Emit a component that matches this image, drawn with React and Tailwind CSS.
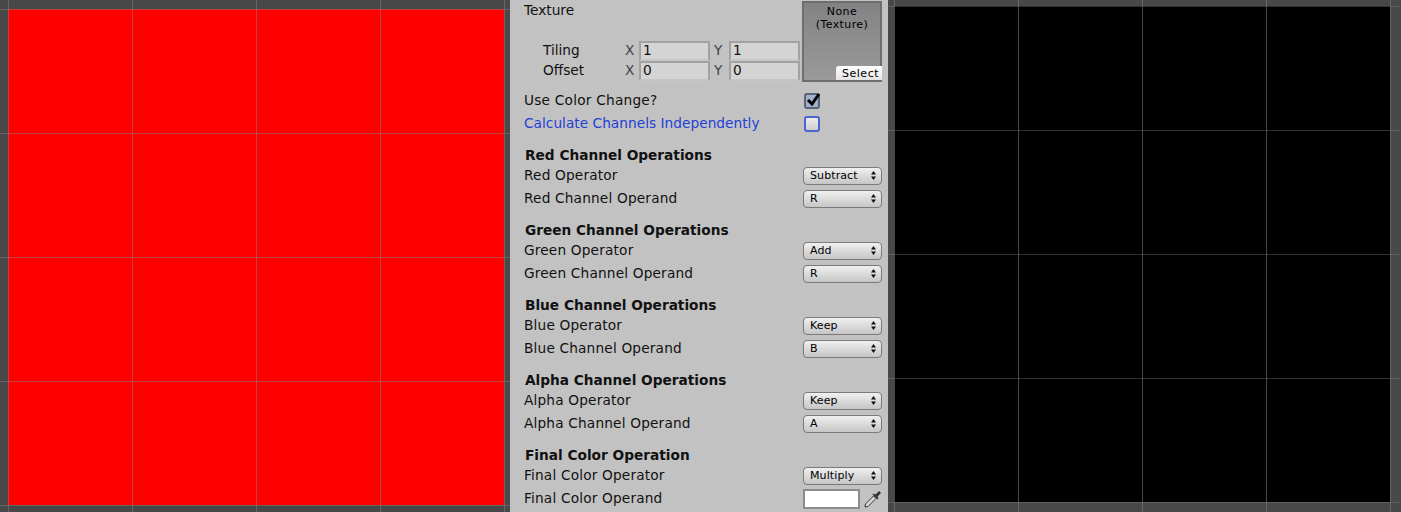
import React from "react";

const lines = [0, 124, 248, 372, 496];

function Viewport({ fill, x, y, w, opacityV, opacityH, className }) {
  return (
    <div className={className}>
      <svg width={w} height="512" className="block">
        <rect width={w} height="512" fill="#484848" />
        <rect x={x} y={y} width="496" height="496" fill={fill} />
        {lines.map((d) => (
          <line key={"v" + d} x1={x + d + 0.5} x2={x + d + 0.5} y1="0" y2="512" stroke="#808080" strokeOpacity={opacityV} strokeWidth="1" />
        ))}
        {lines.map((d) => (
          <line key={"h" + d} y1={y + d + 0.5} y2={y + d + 0.5} x1="0" x2={w} stroke="#808080" strokeOpacity={opacityH} strokeWidth="1" />
        ))}
      </svg>
    </div>
  );
}

function Arrows() {
  return (
    <svg width="5" height="9" viewBox="0 0 5 9" className="block">
      <path d="M2.5 0 L5 3.5 H0 Z M2.5 9 L0 5.5 H5 Z" fill="#111" />
    </svg>
  );
}

function Select({ value }) {
  return (
    <div className="flex h-[18px] w-[79px] items-center justify-between rounded-[4px] border border-[#7a7a7a] bg-gradient-to-b from-[#f0f0f0] to-[#c6c6c6] pl-[6px] pr-[5px] text-[11px] leading-none tracking-[0.1px] text-black">
      <span>{value}</span>
      <Arrows />
    </div>
  );
}

function Row({ label, children }) {
  return (
    <div className="flex h-[23px] items-center justify-between">
      <span className="-mt-px tracking-[0.17px]">{label}</span>
      {children}
    </div>
  );
}

function Group({ title, op, opValue, operand, operandValue, custom }) {
  return (
    <div className="h-[75px]">
      <div className="flex h-[20px] items-center pl-px pt-[3px] font-bold">{title}</div>
      <Row label={op}>
        <Select value={opValue} />
      </Row>
      <Row label={operand}>{custom || <Select value={operandValue} />}</Row>
    </div>
  );
}

function Field({ value }) {
  return (
    <div className="flex h-[20px] w-[71px] items-center border-2 border-[#a2a2a2] border-b-[#c6c6c6] bg-[#d4d4d4] pb-px pl-[2px] leading-none text-[#111]">
      {value}
    </div>
  );
}

function VectorRow({ label, x, y }) {
  return (
    <div className="flex h-[20px] items-center">
      <span className="-mt-[2px] w-[101px] pl-[19px]">{label}</span>
      <span className="-mt-[2px] w-[14px] text-[#444]">X</span>
      <Field value={x} />
      <span className="-mt-[2px] w-[19px] pl-[4px] text-[#444]">Y</span>
      <Field value={y} />
    </div>
  );
}

function Check({ checked, className }) {
  return (
    <div className={"relative h-[16px] w-[16px] rounded-[3px] border-2 " + className}>
      {checked && (
        <svg width="18" height="16" viewBox="0 0 18 16" className="absolute -top-[3px] -left-[1px]">
          <path d="M3 8 L7 12 L14 2" fill="none" stroke="#000" strokeWidth="3" />
        </svg>
      )}
    </div>
  );
}

function Pipette() {
  return (
    <svg width="18" height="18" viewBox="0 0 18 18" className="block">
      <path d="M1 17 L1.5 14 L9.5 6 L12 8.5 L4 16.5 Z" fill="#d8d8d8" stroke="#333" strokeWidth="1" strokeLinejoin="round" />
      <path d="M8.5 4.5 L13.5 9.5 L14.5 8.5 L13.5 6.5 L17 3 L15 1 L11.5 4.5 L9.5 3.5 Z" fill="#333" />
    </svg>
  );
}

export default function App() {
  return (
    <div className="flex h-[512px] w-[1401px] overflow-hidden bg-[#484848] font-['DejaVu_Sans',sans-serif] text-[13.7px] text-[#111]">
      <Viewport className="w-[510px] shrink-0" fill="#ff0000" x={8} y={9} w={510} opacityV={0.55} opacityH={0.5} />
      <div className="w-[378px] shrink-0 bg-[#c2c2c2] pl-[14px] pr-[6px]">
        <div className="relative h-[89px]">
          <div className="flex h-[20px] items-center">Texture</div>
          <div className="mt-[21px]">
            <VectorRow label="Tiling" x="1" y="1" />
            <VectorRow label="Offset" x="0" y="0" />
          </div>
          <div className="absolute right-0 top-px h-[81px] w-[80px] border-2 border-[#6e6e6e] bg-gradient-to-b from-[#838383] to-[#9a9a9a] pt-[2px] text-center text-[11px] leading-[13px] tracking-[0.4px] text-black">
            None
            <br />
            (Texture)
            <div className="absolute -bottom-[2px] -right-[2px] h-[16px] w-[46px] rounded-tl-[3px] border-b-2 border-[#6e6e6e] bg-gradient-to-b from-white to-[#e4e4e4] pr-[3px] text-right text-[11px] leading-[16px] tracking-[0.5px]">
              Select
            </div>
          </div>
        </div>
        <div className="flex h-[23px] items-center justify-between pr-[62px]">
          <span className="-mt-px tracking-[0.22px]">Use Color Change?</span>
          <Check checked className="border-[#59647a] bg-[#9fb0c8]" />
        </div>
        <div className="flex h-[23px] items-center justify-between pr-[62px]">
          <span className="-mt-px tracking-[0.03px] text-[#1f3fd6]">Calculate Channels Independently</span>
          <Check className="border-[#4a64d0] bg-gradient-to-b from-[#ececec] to-[#cfcfcf]" />
        </div>
        <div className="h-[9px]" />
        <Group title="Red Channel Operations" op="Red Operator" opValue="Subtract" operand="Red Channel Operand" operandValue="R" />
        <Group title="Green Channel Operations" op="Green Operator" opValue="Add" operand="Green Channel Operand" operandValue="R" />
        <Group title="Blue Channel Operations" op="Blue Operator" opValue="Keep" operand="Blue Channel Operand" operandValue="B" />
        <Group title="Alpha Channel Operations" op="Alpha Operator" opValue="Keep" operand="Alpha Channel Operand" operandValue="A" />
        <Group
          title="Final Color Operation"
          op="Final Color Operator"
          opValue="Multiply"
          operand="Final Color Operand"
          custom={
            <div className="flex w-[79px] items-center justify-between">
              <div className="h-[20px] w-[57px] border-2 border-[#8c8c8c] bg-white" />
              <Pipette />
            </div>
          }
        />
      </div>
      <Viewport className="w-[513px] shrink-0" fill="#000000" x={6} y={6} w={513} opacityV={0.55} opacityH={0.4} />
    </div>
  );
}
